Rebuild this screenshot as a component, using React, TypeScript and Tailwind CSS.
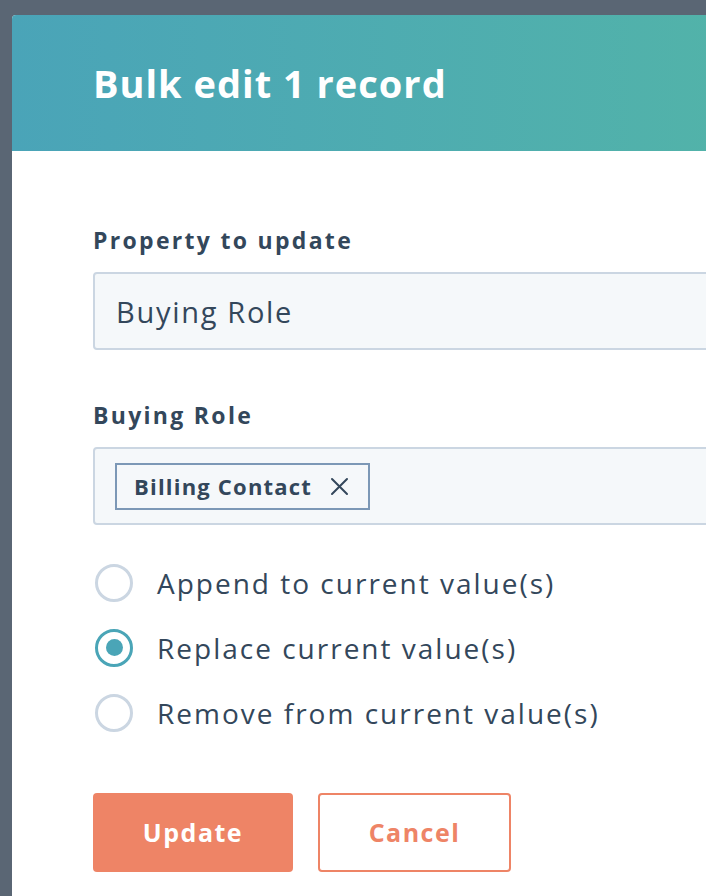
import React from "react";

const font = { fontFamily: "'Open Sans', 'Noto Sans', sans-serif" };

function Radio({ checked, label }: { checked?: boolean; label: string }) {
  return (
    <div className="flex items-center h-[65px]">
      <div className="w-[42px] flex justify-center">
        {checked ? (
          <div className="w-[38px] h-[38px] rounded-full border-[3px] border-[#4aa5b7] flex items-center justify-center bg-white">
            <div className="w-[17px] h-[17px] rounded-full bg-[#4aa5b7]" />
          </div>
        ) : (
          <div className="w-[38px] h-[38px] rounded-full border-[3px] border-[#cbd6e2] bg-white" />
        )}
      </div>
      <span className="ml-[22px] text-[28px] tracking-[2px] text-[#33475b] leading-none">{label}</span>
    </div>
  );
}

export default function App() {
  return (
    <div className="w-[706px] h-[896px] bg-[#5a6674] pt-[15px] pl-[12px] overflow-hidden" style={font}>
      <div className="w-[720px] h-[900px] bg-white rounded-tl-[4px] overflow-hidden">
        <div className="h-[136px] bg-linear-to-r from-[#4aa4b8] to-[#52b3a9] flex items-center pl-[81px]">
          <h1 className="text-[38px] font-bold tracking-[1px] text-white leading-none -mt-[1px]">Bulk edit 1 record</h1>
        </div>
        <div className="pl-[81px] pt-[78px]">
          <div className="text-[23px] font-bold tracking-[2.3px] text-[#33475b] leading-none">Property to update</div>
          <div className="mt-[20px] h-[78px] bg-[#f5f8fa] border-2 border-[#cbd6e2] rounded-[4px] flex items-center pl-[21px]">
            <span className="text-[29px] tracking-[1.7px] text-[#33475b] leading-none">Buying Role</span>
          </div>
          <div className="mt-[54px] text-[23px] font-bold tracking-[2.3px] text-[#33475b] leading-none">Buying Role</div>
          <div className="mt-[20px] h-[78px] bg-[#f5f8fa] border-2 border-[#cbd6e2] rounded-[4px] flex items-center pl-[20px]">
            <div className="h-[47px] border-2 border-[#7c98b6] bg-[#f5f8fa] flex items-center pl-[17px] pr-[19px]">
              <span className="text-[22px] font-bold tracking-[1.2px] text-[#33475b] leading-none">Billing Contact</span>
              <svg className="ml-[18px]" width="19" height="19" viewBox="0 0 19 19" fill="none" stroke="#33475b" strokeWidth="2" strokeLinecap="round">
                <path d="M2 2 L17 17 M17 2 L2 17" />
              </svg>
            </div>
          </div>
          <div className="mt-[25px]">
            <Radio label="Append to current value(s)" />
            <Radio checked label="Replace current value(s)" />
            <Radio label="Remove from current value(s)" />
          </div>
          <div className="mt-[48px] flex gap-[25px]">
            <button className="w-[200px] h-[79px] bg-[#ee8466] rounded-[4px] text-white text-[25px] font-bold tracking-[1.5px]">Update</button>
            <button className="w-[193px] h-[79px] border-2 border-[#ee8466] rounded-[4px] text-[#ee8466] text-[25px] font-bold tracking-[1.5px] bg-white">Cancel</button>
          </div>
        </div>
      </div>
    </div>
  );
}
